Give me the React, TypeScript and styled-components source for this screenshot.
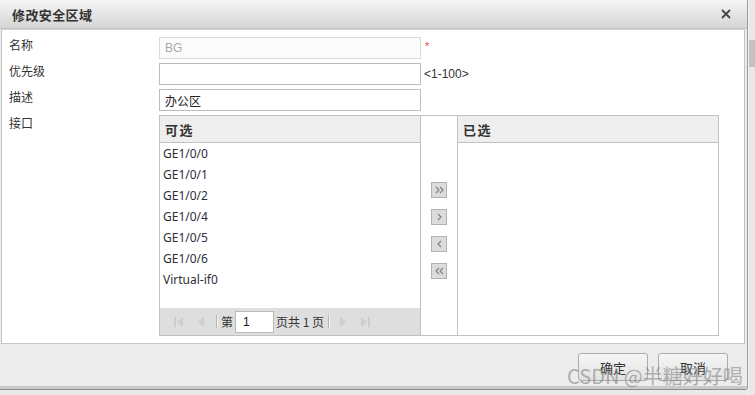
import React from "react";
import styled, { createGlobalStyle } from "styled-components";

const GlobalStyle = createGlobalStyle`
	html, body {
		margin: 0;
		padding: 0;
		background: #e9e9e9;
	}
	body {
		font-family: "Noto Sans CJK SC", "Noto Sans", sans-serif;
		font-size: 12px;
		color: #333;
	}
`;

const available = [
	"GE1/0/0",
	"GE1/0/1",
	"GE1/0/2",
	"GE1/0/4",
	"GE1/0/5",
	"GE1/0/6",
	"Virtual-if0",
];

const Chevron = ({ dir, double }: { dir: "left" | "right"; double?: boolean }) => {
	const one = dir === "right" ? "M0 0 L3 3 L0 6" : "M3 0 L0 3 L3 6";
	return (
		<svg width={double ? 9 : 5} height="8" viewBox={double ? "-1 -1 9 8" : "-1 -1 5 8"}>
			<path d={one} fill="none" stroke="#7d7d7d" strokeWidth="1.1" />
			{double && <path d={one} transform="translate(4 0)" fill="none" stroke="#7d7d7d" strokeWidth="1.1" />}
		</svg>
	);
};

const PagerIcon = ({ kind }: { kind: "first" | "prev" | "next" | "last" }) => (
	<svg width="10" height="12" viewBox="0 0 10 12">
		{kind === "first" && (
			<>
				<rect x="0.5" y="1" width="1.5" height="10" fill="#c9c9c9" />
				<path d="M9 1 L3 6 L9 11 Z" fill="#cfcfcf" />
			</>
		)}
		{kind === "prev" && <path d="M8 1 L2 6 L8 11 Z" fill="#cfcfcf" />}
		{kind === "next" && <path d="M2 1 L8 6 L2 11 Z" fill="#cfcfcf" />}
		{kind === "last" && (
			<>
				<path d="M1 1 L7 6 L1 11 Z" fill="#cfcfcf" />
				<rect x="8" y="1" width="1.5" height="10" fill="#c9c9c9" />
			</>
		)}
	</svg>
);

export default function App() {
	return (
		<Page>
			<GlobalStyle />
			<Dialog>
				<TitleBar>
					<Title>修改安全区域</Title>
					<Close>
						<svg width="10" height="10" viewBox="0 0 10 10">
							<path d="M1 1 L9 9 M9 1 L1 9" stroke="#454545" strokeWidth="1.8" />
						</svg>
					</Close>
				</TitleBar>
				<Body>
					<Panel>
						<Form>
							<Label>名称</Label>
							<Field>
								<TextInput disabled defaultValue="BG" />
								<Required>*</Required>
							</Field>
							<Label>优先级</Label>
							<Field>
								<TextInput defaultValue="" />
								<Hint>&lt;1-100&gt;</Hint>
							</Field>
							<Label>描述</Label>
							<Field>
								<TextInput defaultValue="办公区" />
							</Field>
							<Label>接口</Label>
							<Transfer>
								<ListPane>
									<PaneHeader>可选</PaneHeader>
									<Items>
										{available.map((name) => (
											<Item key={name}>{name}</Item>
										))}
									</Items>
									<Pager>
										<PagerButton $ml={14}>
											<PagerIcon kind="first" />
										</PagerButton>
										<PagerButton $ml={12}>
											<PagerIcon kind="prev" />
										</PagerButton>
										<Separator $ml={10} />
										<PagerText $ml={4}>第</PagerText>
										<PageInput defaultValue="1" />
										<PagerText $ml={2}>页共 1 页</PagerText>
										<Separator $ml={4} />
										<PagerButton $ml={9}>
											<PagerIcon kind="next" />
										</PagerButton>
										<PagerButton $ml={12}>
											<PagerIcon kind="last" />
										</PagerButton>
									</Pager>
								</ListPane>
								<Moves>
									<MoveButton>
										<Chevron dir="right" double />
									</MoveButton>
									<MoveButton>
										<Chevron dir="right" />
									</MoveButton>
									<MoveButton>
										<Chevron dir="left" />
									</MoveButton>
									<MoveButton>
										<Chevron dir="left" double />
									</MoveButton>
								</Moves>
								<ListPane $right>
									<PaneHeader>已选</PaneHeader>
									<Items />
								</ListPane>
							</Transfer>
						</Form>
					</Panel>
				</Body>
				<Footer>
					<Button>确定</Button>
					<Button>取消</Button>
				</Footer>
			</Dialog>
			<Scrollbar>
				<Thumb />
			</Scrollbar>
			<Watermark>CSDN @半糖好好喝</Watermark>
		</Page>
	);
}

const Page = styled.div`
	position: relative;
	display: flex;
	width: 755px;
	height: 395px;
	overflow: hidden;
	background: #e9e9e9;
`;

const Dialog = styled.div`
	width: 748px;
	height: 390px;
	box-sizing: border-box;
	display: flex;
	flex-direction: column;
	background: #ececec;
	border-right: 1px solid #9c9c9c;
	border-bottom: 1px solid #8c8c8c;
	border-bottom-right-radius: 3px;
`;

const TitleBar = styled.div`
	height: 28px;
	flex: none;
	display: flex;
	align-items: center;
	justify-content: space-between;
	padding: 0 16px 0 12px;
	background: linear-gradient(#f5f5f5, #d5d5d5);
	border-bottom: 1px solid #c3c3c3;
`;

const Title = styled.div`
	font-size: 13px;
	font-weight: bold;
	color: #333;
	letter-spacing: 0.4px;
`;

const Close = styled.div`
	display: flex;
	width: 10px;
	height: 10px;
`;

const Body = styled.div`
	flex: none;
	padding: 0 2px 0 1px;
`;

const Panel = styled.div`
	height: 315px;
	box-sizing: border-box;
	background: #fff;
	border: 1px solid #c4c4c4;
	border-top-color: #d0d0d0;
	padding: 7px 0 0 7px;
`;

const Form = styled.div`
	display: grid;
	grid-template-columns: 150px 1fr;
	row-gap: 4px;
	align-items: start;
`;

const Label = styled.div`
	font-size: 12px;
	line-height: 15px;
	color: #333;
`;

const Field = styled.div`
	display: flex;
	align-items: center;
	height: 22px;
`;

const TextInput = styled.input`
	width: 262px;
	height: 22px;
	box-sizing: border-box;
	margin: 0;
	padding: 0 5px;
	border: 1px solid #bdbdbd;
	background: #fff;
	font-family: "Noto Sans CJK SC", sans-serif;
	font-size: 12px;
	color: #222;
	outline: none;
	&:disabled {
		background: #fbfbfb;
		border-color: #dadada;
		color: #a8a8a8;
		font-family: "Liberation Sans", sans-serif;
	}
`;

const Required = styled.span`
	margin-left: 4px;
	color: #e44;
	font-family: "Liberation Sans", sans-serif;
	font-size: 11px;
	align-self: flex-start;
	margin-top: 3px;
`;

const Hint = styled.span`
	margin-left: 3px;
	font-family: "Liberation Sans", sans-serif;
	font-size: 12px;
	color: #333;
`;

const Transfer = styled.div`
	display: flex;
	width: 560px;
	height: 221px;
	box-sizing: border-box;
	border: 1px solid #c2c2c2;
`;

const ListPane = styled.div<{ $right?: boolean }>`
	width: 260px;
	flex: none;
	display: flex;
	flex-direction: column;
	${({ $right }) => ($right ? "border-left: 1px solid #c2c2c2;" : "border-right: 1px solid #c2c2c2;")}
`;

const PaneHeader = styled.div`
	height: 26px;
	flex: none;
	display: flex;
	align-items: center;
	padding-left: 5px;
	background: #eeeeee;
	border-bottom: 1px solid #c2c2c2;
	font-size: 13px;
	font-weight: bold;
	letter-spacing: 1.5px;
	color: #333;
`;

const Items = styled.div`
	flex: 1;
	background: #fff;
`;

const Item = styled.div`
	height: 21px;
	line-height: 21px;
	padding-left: 3px;
	font-family: "Noto Sans", sans-serif;
	font-size: 12px;
	color: #2e2e3a;
`;

const Pager = styled.div`
	height: 27px;
	flex: none;
	display: flex;
	align-items: center;
	background: #dedede;
`;

const PagerButton = styled.span<{ $ml: number }>`
	display: flex;
	margin-left: ${({ $ml }) => $ml}px;
`;

const Separator = styled.span<{ $ml: number }>`
	width: 1px;
	height: 13px;
	margin-left: ${({ $ml }) => $ml}px;
	background: #b5b5b5;
	box-shadow: 1px 0 0 #f4f4f4;
`;

const PagerText = styled.span<{ $ml: number }>`
	margin-left: ${({ $ml }) => $ml}px;
	font-size: 12px;
	color: #333;
`;

const PageInput = styled.input`
	width: 39px;
	height: 22px;
	box-sizing: border-box;
	margin: 0 0 0 2px;
	padding: 0 7px;
	border: 1px solid #bababa;
	background: #fff;
	font-family: "Liberation Sans", sans-serif;
	font-size: 12px;
	color: #111;
	outline: none;
`;

const Moves = styled.div`
	width: 36px;
	flex: none;
	display: flex;
	flex-direction: column;
	align-items: center;
	gap: 11px;
	padding-top: 66px;
	background: #fff;
`;

const MoveButton = styled.div`
	width: 16px;
	height: 16px;
	box-sizing: border-box;
	display: flex;
	align-items: center;
	justify-content: center;
	background: #dcdcdc;
	border: 1px solid #b2b2b2;
`;

const Footer = styled.div`
	flex: 1;
	display: flex;
	justify-content: flex-end;
	align-items: flex-start;
	gap: 10px;
	padding: 9px 19px 0 0;
	border-bottom: 3px solid #c9c9c9;
`;

const Button = styled.button`
	width: 70px;
	height: 28px;
	box-sizing: border-box;
	border: 1px solid #acacac;
	border-radius: 3px;
	background: linear-gradient(#f6f6f6, #e2e2e2);
	font-family: "Noto Sans CJK SC", sans-serif;
	font-size: 13px;
	color: #333;
	padding: 0;
`;

const Scrollbar = styled.div`
	width: 7px;
	flex: none;
	align-self: stretch;
	background: #e8e8e8;
	border-left: 1px solid #f2f2f2;
	padding-top: 40px;
	box-sizing: border-box;
`;

const Thumb = styled.div`
	height: 27px;
	background: #c3c3c3;
`;

const Watermark = styled.div`
	position: absolute;
	left: 567px;
	top: 363px;
	font-family: "Noto Sans CJK SC", sans-serif;
	font-size: 20px;
	line-height: 26px;
	color: rgba(130, 130, 130, 0.6);
	white-space: nowrap;
	pointer-events: none;
`;
